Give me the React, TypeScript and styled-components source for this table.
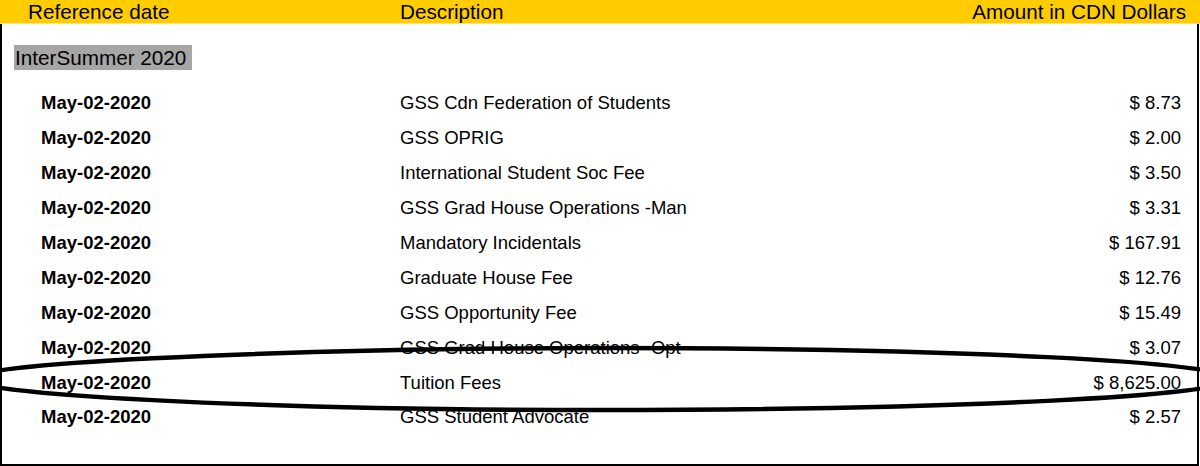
import React from "react";
import styled, { createGlobalStyle } from "styled-components";

const GlobalStyle = createGlobalStyle`
  html, body {
    margin: 0;
    padding: 0;
    background: #ffffff;
  }
  body {
    font-family: "Liberation Sans", Arial, sans-serif;
    color: #000000;
  }
`;

const charges = [
  { date: "May-02-2020", description: "GSS Cdn Federation of Students", amount: "$ 8.73" },
  { date: "May-02-2020", description: "GSS OPRIG", amount: "$ 2.00" },
  { date: "May-02-2020", description: "International Student Soc Fee", amount: "$ 3.50" },
  { date: "May-02-2020", description: "GSS Grad House Operations -Man", amount: "$ 3.31" },
  { date: "May-02-2020", description: "Mandatory Incidentals", amount: "$ 167.91" },
  { date: "May-02-2020", description: "Graduate House Fee", amount: "$ 12.76" },
  { date: "May-02-2020", description: "GSS Opportunity Fee", amount: "$ 15.49" },
  { date: "May-02-2020", description: "GSS Grad House Operations -Opt", amount: "$ 3.07" },
  { date: "May-02-2020", description: "Tuition Fees", amount: "$ 8,625.00" },
  { date: "May-02-2020", description: "GSS Student Advocate", amount: "$ 2.57" },
];

export default function App() {
  return (
    <>
      <GlobalStyle />
      <Page>
        <Header>
          <HeaderCell>Reference date</HeaderCell>
          <HeaderCell>Description</HeaderCell>
          <HeaderCell $right>Amount in CDN Dollars</HeaderCell>
        </Header>
        <Statement>
          <TermLabel>InterSummer 2020</TermLabel>
          <Rows>
            {charges.map((c, i) => (
              <Row key={i}>
                <DateCell>{c.date}</DateCell>
                <Cell>{c.description}</Cell>
                <Cell $right>{c.amount}</Cell>
              </Row>
            ))}
          </Rows>
        </Statement>
        {/* hand-drawn circle around the tuition line */}
        <Scribble viewBox="0 0 1200 466">
          <path
            d="M -32 379 C -32 364, 250 349, 600 348 C 950 348, 1232 362, 1232 379 C 1232 396, 950 410, 600 410 C 250 410, -32 394, -32 379 Z"
            fill="none"
            stroke="#000"
            strokeWidth="4.5"
          />
        </Scribble>
      </Page>
    </>
  );
}

const Page = styled.div`
  position: relative;
  width: 1200px;
  height: 466px;
  overflow: hidden;
`;

const Header = styled.div`
  display: grid;
  grid-template-columns: 372px 1fr 400px;
  height: 24px;
  padding: 0 14px 0 28px;
  background: #ffcc00;
  border-bottom: 1px solid #ffe27a;
  box-sizing: border-box;
`;

const HeaderCell = styled.div<{ $right?: boolean }>`
  font-size: 20.7px;
  line-height: 24px;
  text-align: ${(p) => (p.$right ? "right" : "left")};
  white-space: nowrap;
`;

const Statement = styled.div`
  width: 1199px;
  height: 442px;
  box-sizing: border-box;
  border: 2px solid #000;
  border-top: none;
  padding: 21px 16px 0 12px;
`;

const TermLabel = styled.div`
  display: inline-block;
  background: #a6a6a6;
  font-size: 20.7px;
  line-height: 25px;
  padding: 0 6px 0 1px;
`;

const Rows = styled.div`
  display: flex;
  flex-direction: column;
  margin-top: 16px;
`;

const Row = styled.div`
  display: grid;
  grid-template-columns: 359px 1fr 300px;
  height: 34.9px;
  align-items: center;
  padding-left: 27px;
`;

const Cell = styled.div<{ $right?: boolean }>`
  font-size: 18.5px;
  text-align: ${(p) => (p.$right ? "right" : "left")};
  white-space: nowrap;
`;

const DateCell = styled(Cell)`
  font-weight: bold;
`;

const Scribble = styled.svg`
  position: absolute;
  inset: 0;
  width: 1200px;
  height: 466px;
  pointer-events: none;
`;
